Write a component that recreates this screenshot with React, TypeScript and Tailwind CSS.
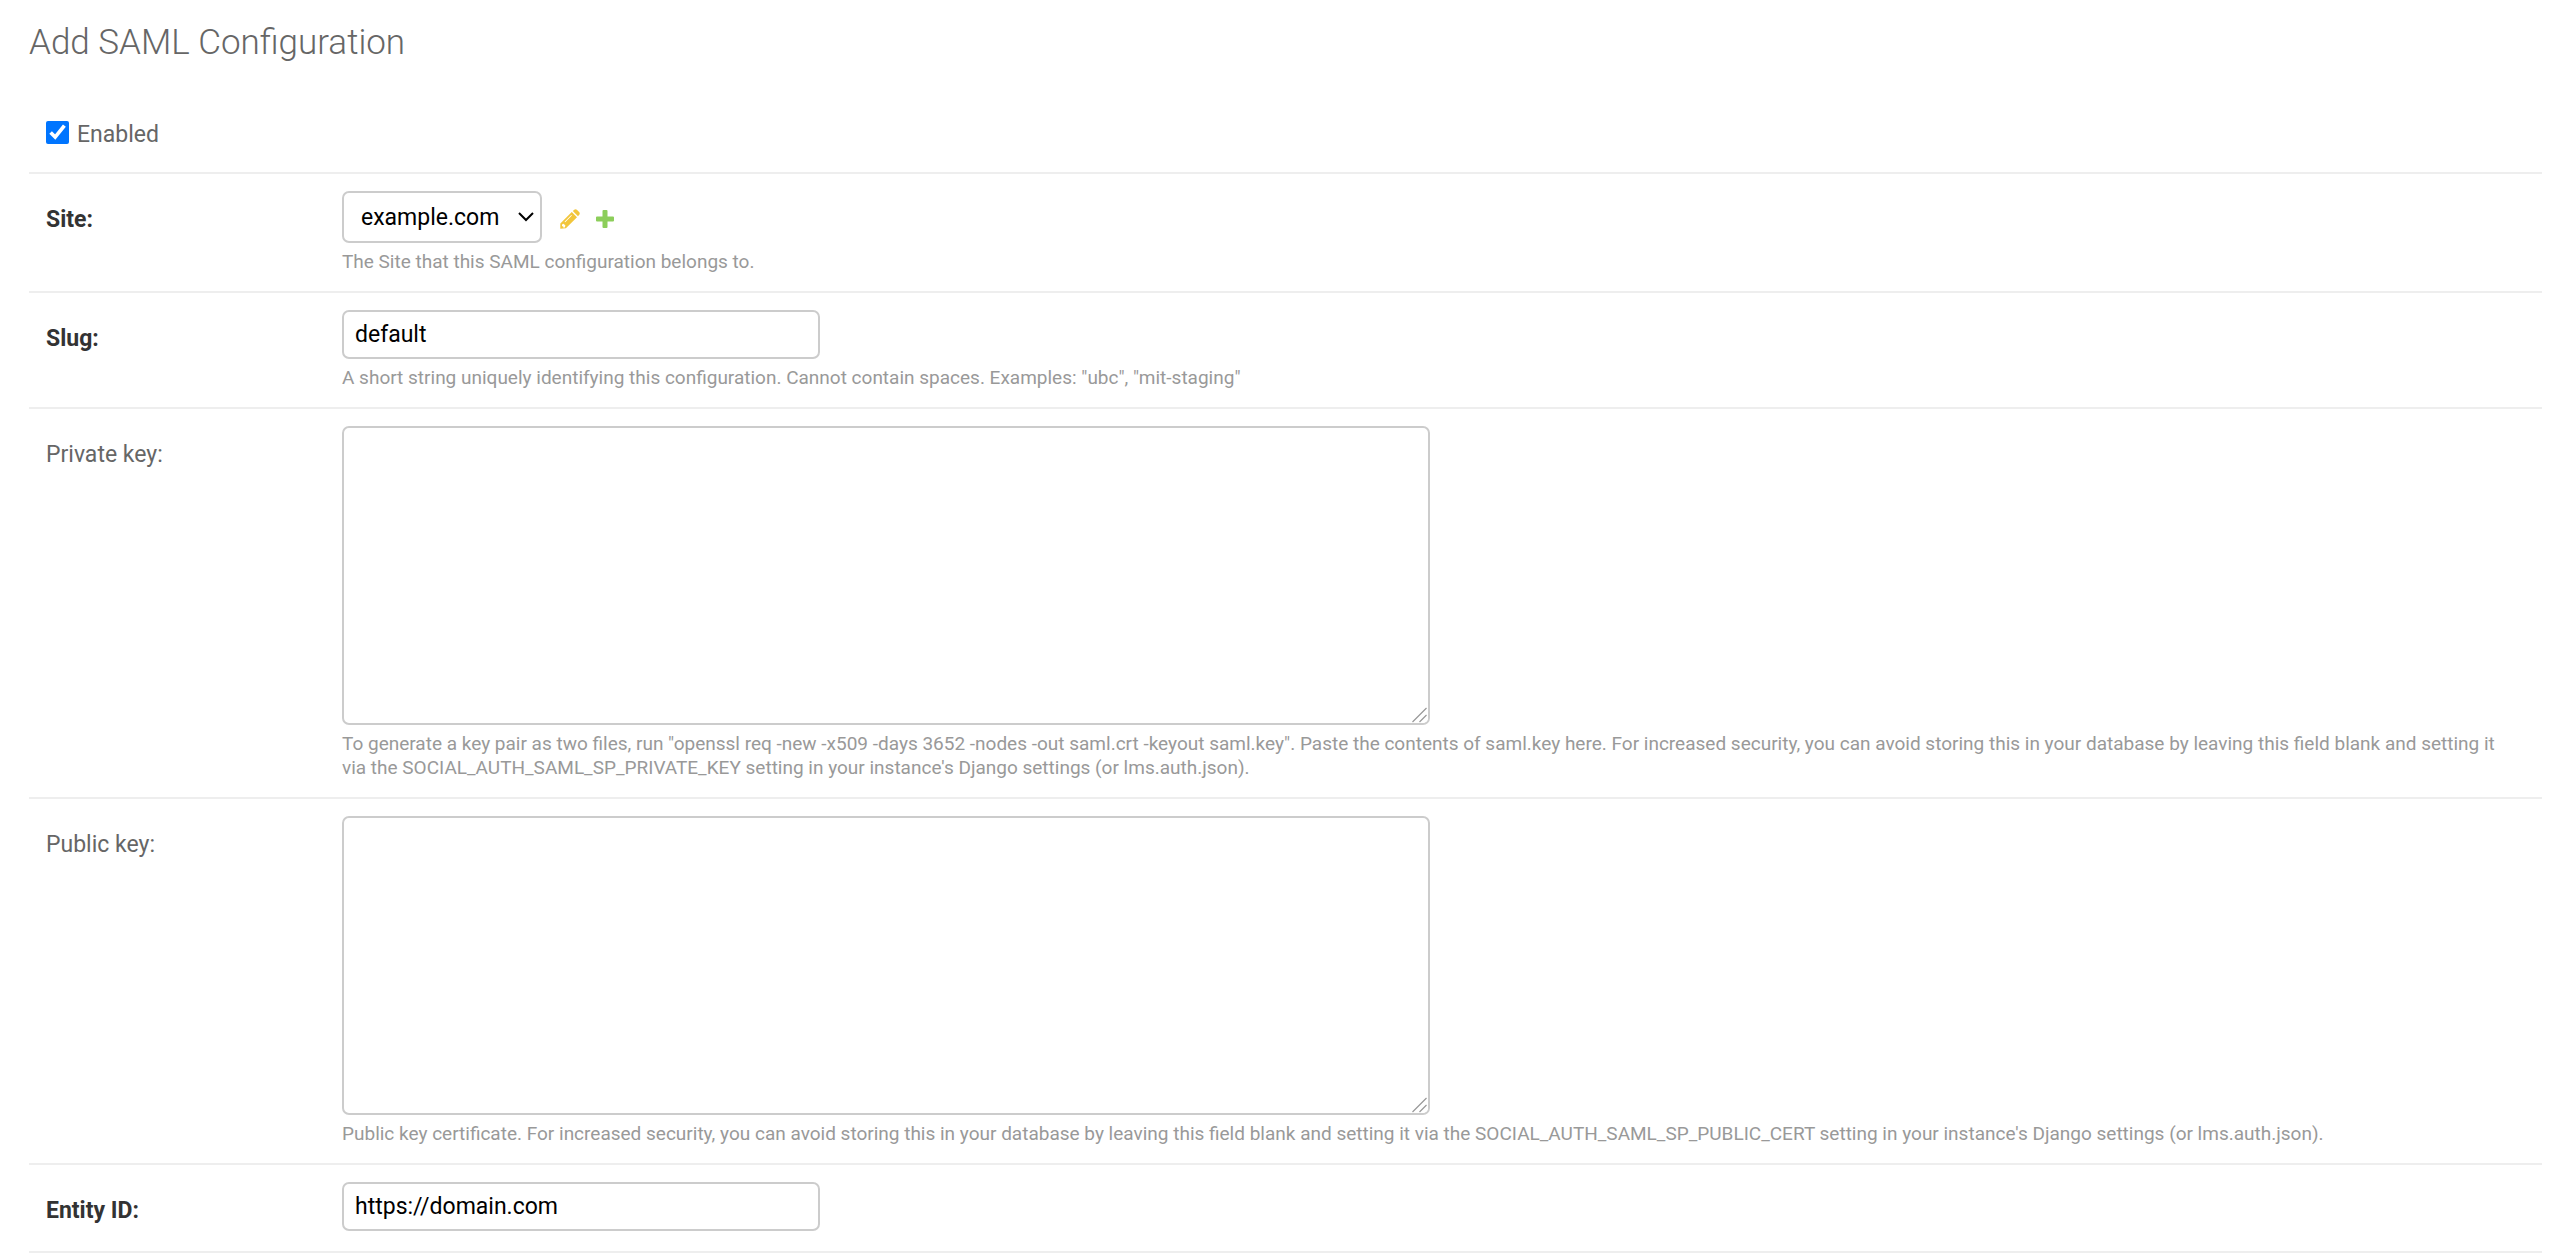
import React, { JSX, ReactNode, useState } from 'react';

type FormRowProps = {
    id: string;
    label: string;
    required?: boolean;
    help?: string;
    children: ReactNode;
};

type KeyFieldProps = {
    id: string;
    value: string;
    onChange: (value: string) => void;
};

const controlClass = "rounded-[7px] border-2 border-[#ccc] bg-white text-[23px] text-black outline-none focus:border-[#999]";

function FormRow({ id, label, required = false, help, children }: FormRowProps): JSX.Element {
    return (
        <div className="flex border-b-2 border-[#eee] px-[17px] pt-[17px]">
            <label
                htmlFor={id}
                className={required
                    ? "w-[296px] shrink-0 pt-4 text-[23px] leading-[26px] font-bold text-[#333]"
                    : "w-[296px] shrink-0 pt-4 text-[23px] leading-[26px] text-[#666]"}
            >
                {label}
            </label>
            <div className={help ? "min-w-0 flex-1 pr-4 pb-[17px]" : "min-w-0 flex-1 pr-4 pb-5"}>
                <div className="flex items-center">{children}</div>
                {help && <p className="mt-[7px] text-[19px] leading-6 text-[#999]">{help}</p>}
            </div>
        </div>
    );
}

function KeyField({ id, value, onChange }: KeyFieldProps): JSX.Element {
    return (
        <div className="relative flex">
            <textarea
                id={id}
                value={value}
                onChange={(e) => onChange(e.target.value)}
                className={`${controlClass} h-[299px] w-[1088px] px-[11px] py-2`}
            />
            {/* Larger grip drawn over the native one */}
            <svg
                viewBox="0 0 17 17"
                className="pointer-events-none absolute right-[2px] bottom-[2px] size-[17px] rounded-br-[5px] bg-white"
                fill="none"
                stroke="#999"
                strokeWidth="1.2"
                aria-hidden="true"
            >
                <path d="M1.5 16 15.5 2M8.5 16 15.5 9" />
            </svg>
        </div>
    );
}

function PencilIcon(): JSX.Element {
    return (
        <svg viewBox="0 0 20 20" className="size-5" fill="#f2c63c" aria-hidden="true">
            <path d="M11.8 3 17 8.2 5.9 19.3 0.3 19.8V14.5ZM2 15.6V17.3H3.2V18.4H4.8L5.4 16.6 3.6 14.8ZM5.2 13.3 11.9 6.6 11.3 6 4.6 12.7Z" fillRule="evenodd" />
            <path d="M12.8 2 14.2 0.8Q15.7-0.4 17.1 0.9L19.1 2.9Q20.4 4.3 19.2 5.8L18 7.2Z" />
        </svg>
    );
}

function PlusIcon(): JSX.Element {
    return (
        <svg viewBox="0 0 18 18" className="size-[18px]" fill="#8cce5a" aria-hidden="true">
            <path d="M7.5 0H10.5Q11.5 0 11.5 1V6.5H17Q18 6.5 18 7.5V10.5Q18 11.5 17 11.5H11.5V17Q11.5 18 10.5 18H7.5Q6.5 18 6.5 17V11.5H1Q0 11.5 0 10.5V7.5Q0 6.5 1 6.5H6.5V1Q6.5 0 7.5 0Z" />
        </svg>
    );
}

export default function App(): JSX.Element {
    const [enabled, setEnabled] = useState(true);
    const [slug, setSlug] = useState("default");
    const [privateKey, setPrivateKey] = useState("");
    const [publicKey, setPublicKey] = useState("");
    const [entityId, setEntityId] = useState("https://domain.com");

    return (
        <main className="bg-white pt-[21px] pr-[18px] pl-[29px] font-['Roboto',sans-serif]">
            <h1 className="mb-[31px] text-[35px] leading-[44px] font-light text-[#666]">Add SAML Configuration</h1>

            <form onSubmit={(e) => e.preventDefault()}>
                <div className="flex items-start gap-2 border-b-2 border-[#eee] px-[17px] pt-[25px] pb-[23px]">
                    <input
                        id="enabled"
                        type="checkbox"
                        checked={enabled}
                        onChange={(e) => setEnabled(e.target.checked)}
                        className="size-[23px]"
                    />
                    <label htmlFor="enabled" className="text-[23px] leading-7 text-[#666]">Enabled</label>
                </div>

                <FormRow id="site" label="Site:" required help="The Site that this SAML configuration belongs to.">
                    <div className="relative">
                        <select id="site" className={`${controlClass} block h-[52px] w-[200px] appearance-none pt-[2px] pl-[17px]`}>
                            <option>example.com</option>
                        </select>
                        <svg viewBox="0 0 16 10" className="pointer-events-none absolute top-[21px] right-2 h-[10px] w-4" fill="none" stroke="#000" strokeWidth="2" aria-hidden="true">
                            <path d="M1 1 8 8 15 1" />
                        </svg>
                    </div>
                    <div className="ml-[18px] flex items-center gap-4 pt-1">
                        <button type="button" aria-label="Change selected site"><PencilIcon /></button>
                        <button type="button" aria-label="Add another site"><PlusIcon /></button>
                    </div>
                </FormRow>

                <FormRow
                    id="slug"
                    label="Slug:"
                    required
                    help={'A short string uniquely identifying this configuration. Cannot contain spaces. Examples: "ubc", "mit-staging"'}
                >
                    <input
                        id="slug"
                        type="text"
                        value={slug}
                        onChange={(e) => setSlug(e.target.value)}
                        className={`${controlClass} h-[49px] w-[478px] px-[11px]`}
                    />
                </FormRow>

                <FormRow
                    id="private-key"
                    label="Private key:"
                    help={'To generate a key pair as two files, run "openssl req -new -x509 -days 3652 -nodes -out saml.crt -keyout saml.key". Paste the contents of saml.key here. For increased security, you can avoid storing this in your database by leaving this field blank and setting it via the SOCIAL_AUTH_SAML_SP_PRIVATE_KEY setting in your instance\'s Django settings (or lms.auth.json).'}
                >
                    <KeyField id="private-key" value={privateKey} onChange={setPrivateKey} />
                </FormRow>

                <FormRow
                    id="public-key"
                    label="Public key:"
                    help="Public key certificate. For increased security, you can avoid storing this in your database by leaving this field blank and setting it via the SOCIAL_AUTH_SAML_SP_PUBLIC_CERT setting in your instance's Django settings (or lms.auth.json)."
                >
                    <KeyField id="public-key" value={publicKey} onChange={setPublicKey} />
                </FormRow>

                <FormRow id="entity-id" label="Entity ID:" required>
                    <input
                        id="entity-id"
                        type="text"
                        value={entityId}
                        onChange={(e) => setEntityId(e.target.value)}
                        className={`${controlClass} h-[49px] w-[478px] px-[11px]`}
                    />
                </FormRow>
            </form>
        </main>
    );
}
